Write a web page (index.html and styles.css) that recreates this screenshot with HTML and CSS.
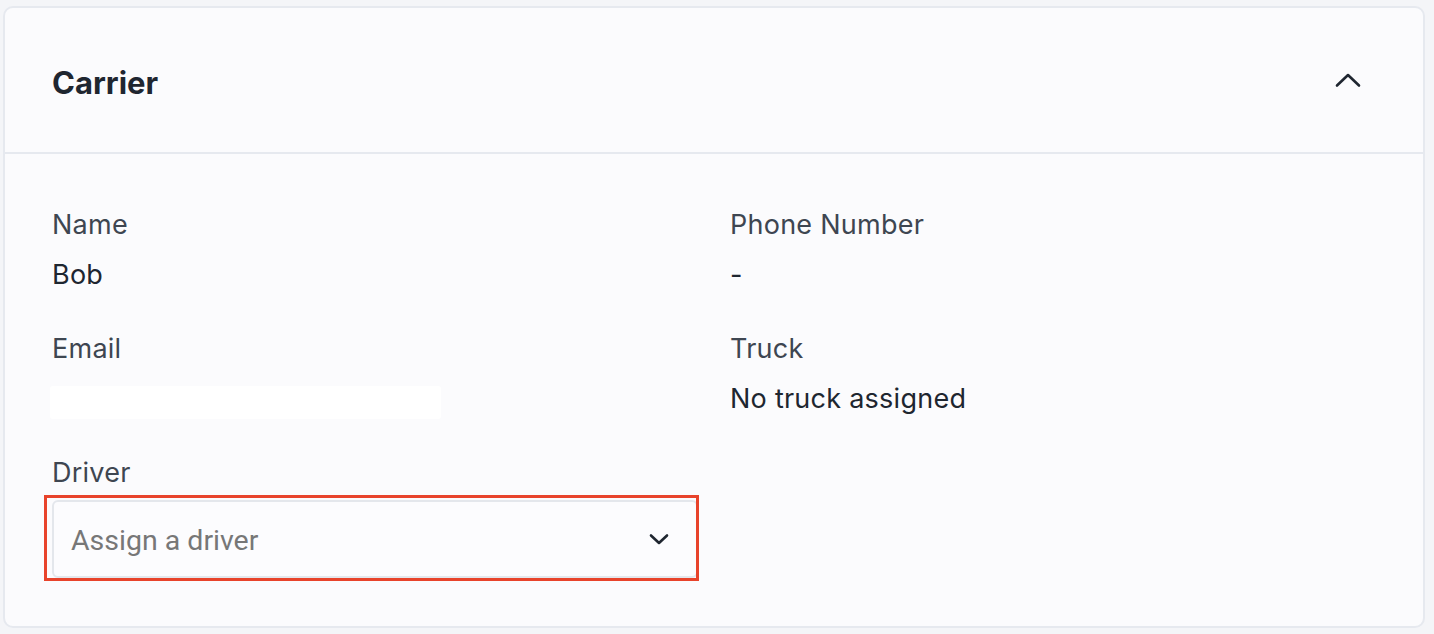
FILE: index.html
```html
<!DOCTYPE html>
<html lang="en">
<head>
  <meta charset="UTF-8" />
  <meta name="viewport" content="width=device-width, initial-scale=1.0"/>
  <title>Carrier</title>
  <link rel="stylesheet" href="styles.css">
</head>
<body>
  <div class="card">
    <div class="card-header">
      <h2>Carrier</h2>
      <button class="toggle" aria-label="Collapse">
        <svg width="28" height="16" viewBox="0 0 28 16" fill="none">
          <path d="M3 13.5 L14 3 L25 13.5" stroke="#1f2630" stroke-width="2.6" stroke-linecap="round" stroke-linejoin="round"/>
        </svg>
      </button>
    </div>

    <div class="card-body">
      <div class="field">
        <div class="label">Name</div>
        <div class="value">Bob</div>
      </div>
      <div class="field">
        <div class="label">Phone Number</div>
        <div class="value">-</div>
      </div>
      <div class="field">
        <div class="label">Email</div>
        <div class="value"><span class="redacted"></span></div>
      </div>
      <div class="field">
        <div class="label">Truck</div>
        <div class="value">No truck assigned</div>
      </div>
      <div class="field">
        <div class="label">Driver</div>
        <div class="select-wrap">
          <div class="select">
            <span class="placeholder">Assign a driver</span>
            <svg width="22" height="14" viewBox="0 0 22 14" fill="none">
              <path d="M3 3.5 L11 11 L19 3.5" stroke="#1f2630" stroke-width="2.6" stroke-linecap="round" stroke-linejoin="round"/>
            </svg>
          </div>
          <div class="highlight"></div>
        </div>
      </div>
    </div>
  </div>
</body>
</html>
```

FILE: styles.css
```css
body {
  font-family: Inter, "Noto Sans", sans-serif;
  margin: 0;
  padding: 0;
  background: #f4f5f8;
}

.card {
  margin: 6px 9px 0 3px;
  background: #fbfbfd;
  border: 2px solid #e6e9ef;
  border-radius: 10px;
}

.card-header {
  height: 144px;
  padding: 0 47px;
  display: flex;
  align-items: center;
  justify-content: space-between;
  border-bottom: 2px solid #e6e9ef;
}

.card-header h2 {
  margin: 0;
  font-size: 31px;
  font-weight: 700;
  color: #1f2630;
  position: relative;
  top: 2px;
}

.toggle {
  background: none;
  border: none;
  padding: 0;
  margin-right: 14px;
  display: flex;
  cursor: pointer;
}

.card-body {
  padding: 51px 47px 48px;
  display: grid;
  grid-template-columns: 1fr 1fr;
  column-gap: 32px;
  row-gap: 34px;
}

.label {
  font-size: 27px;
  letter-spacing: 0.25px;
  line-height: 40px;
  color: #3e4651;
}

.value {
  margin-top: 10px;
  height: 40px;
  font-size: 27px;
  letter-spacing: 0.25px;
  line-height: 40px;
  color: #1e2630;
  display: flex;
  align-items: center;
}

.redacted {
  display: block;
  width: 391px;
  height: 33px;
  margin-left: -2px;
  position: relative;
  top: 3px;
  background: #ffffff;
  border-radius: 3px;
}

.select-wrap {
  position: relative;
  margin-top: 7px;
}

.select {
  height: 74px;
  border: 2px solid #e4e7ec;
  border-radius: 6px;
  background: #fcfcfe;
  display: flex;
  align-items: center;
  justify-content: space-between;
  padding: 0 26px 0 17px;
}

.placeholder {
  font-family: Roboto, "Liberation Sans", sans-serif;
  font-size: 28.5px;
  color: #777777;
  position: relative;
  top: 1px;
}

.highlight {
  position: absolute;
  left: -8px;
  top: -5px;
  right: -1px;
  bottom: -3px;
  border: 3px solid #e8432b;
}
```
